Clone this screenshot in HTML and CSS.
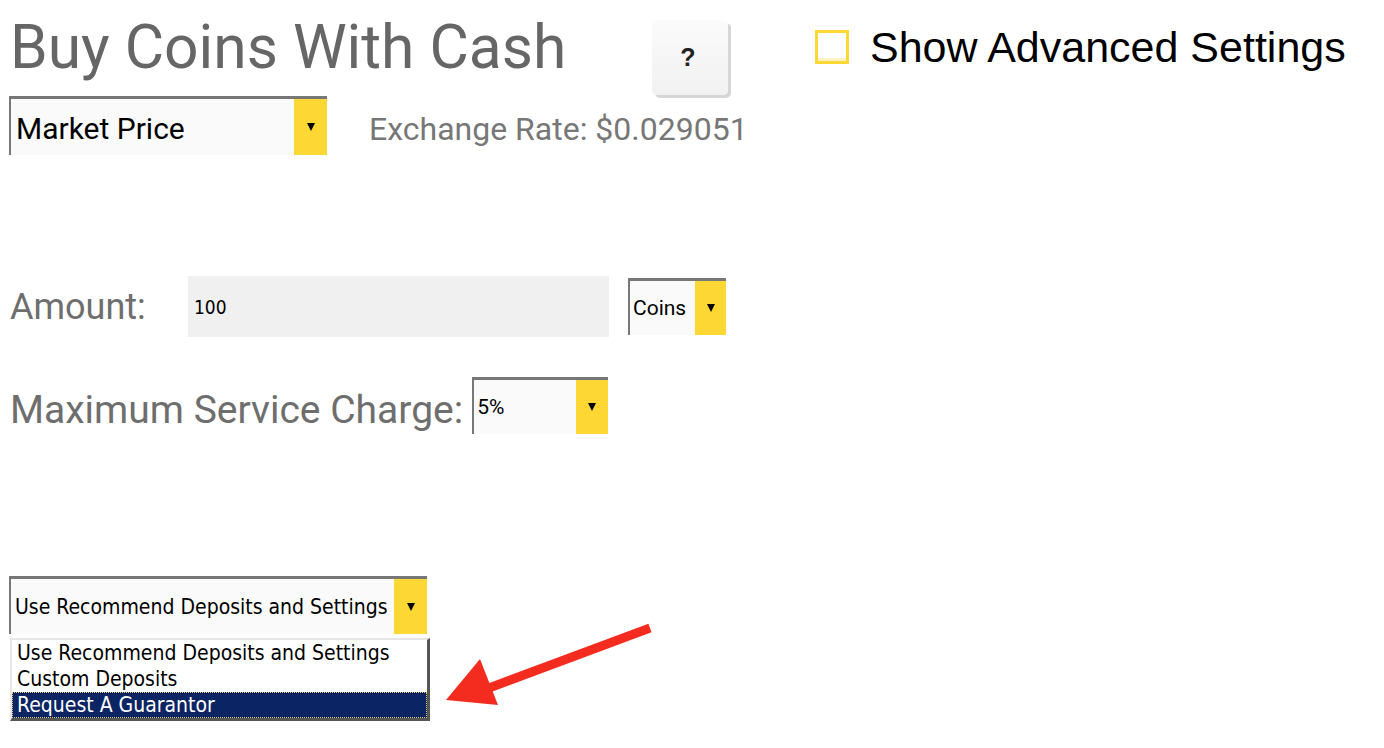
FILE: index.html
```html
<!DOCTYPE html>
<html>
<head>
<meta charset="utf-8">
<link rel="stylesheet" href="styles.css">
</head>
<body>
<div class="page">
  <div class="row-head">
    <h1 class="title">Buy Coins With Cash</h1>
    <button class="help">?</button>
    <label class="adv">
      <span class="checkbox"></span>
      <span class="adv-text">Show Advanced Settings</span>
    </label>
  </div>

  <div class="row-rate">
    <div class="select select-market">
      <span class="select-text">Market Price</span>
      <span class="select-btn"><span class="tri"></span></span>
    </div>
    <span class="rate">Exchange Rate: $0.029051</span>
  </div>

  <div class="row-amount">
    <span class="label label-amount">Amount:</span>
    <div class="input">100</div>
    <div class="select select-coins">
      <span class="select-text small">Coins</span>
      <span class="select-btn"><span class="tri"></span></span>
    </div>
  </div>

  <div class="row-charge">
    <span class="label label-charge">Maximum Service Charge:</span>
    <div class="select select-charge">
      <span class="select-text small">5%</span>
      <span class="select-btn"><span class="tri"></span></span>
    </div>
  </div>

  <div class="deposits">
    <div class="select select-deposits">
      <span class="select-text opt">Use Recommend Deposits and Settings</span>
      <span class="select-btn"><span class="tri"></span></span>
    </div>
    <ul class="list">
      <li class="opt">Use Recommend Deposits and Settings</li>
      <li class="opt">Custom Deposits</li>
      <li class="opt selected">Request A Guarantor</li>
    </ul>
  </div>
</div>

<svg class="arrow" width="220" height="100" viewBox="0 0 220 100">
  <line x1="206" y1="28" x2="45" y2="88" stroke="#f42c1f" stroke-width="9"/>
  <polygon points="2,104 36,63 54,109" fill="#f42c1f" transform="translate(0,-4)"/>
</svg>
</body>
</html>
```

FILE: styles.css
```css
html, body {
  margin: 0;
  padding: 0;
  background: #ffffff;
}

.page {
  padding: 12px 0 0 9px;
}

.row-head {
  display: flex;
  align-items: flex-start;
  height: 83px;
}

.title {
  margin: 0 0 0 1px;
  font-family: Roboto, "Liberation Sans", sans-serif;
  font-weight: 400;
  font-size: 60.5px;
  line-height: 72px;
  color: #666666;
  width: 642px;
  white-space: nowrap;
}

.help {
  margin-top: 8px;
  width: 76px;
  height: 75px;
  border: none;
  border-radius: 5px;
  background: linear-gradient(#fbfbfb, #f1f1f1);
  box-shadow: 3px 3px 0 #d6d6d6;
  font-family: "Liberation Sans", Arial, sans-serif;
  font-weight: 700;
  font-size: 25px;
  color: #222222;
  padding: 0 4px 0 0;
}

.adv {
  display: flex;
  align-items: flex-start;
  margin-left: 87px;
  margin-top: 11px;
}

.checkbox {
  width: 28px;
  height: 28px;
  border: 3px solid #fdd835;
  box-shadow: inset 0 -3px 0 #fff3c4;
  margin-top: 7px;
  background: #ffffff;
}

.adv-text {
  margin-left: 21px;
  font-family: "Liberation Sans", Arial, sans-serif;
  font-size: 43px;
  line-height: 48px;
  color: #000000;
  white-space: nowrap;
}

.row-rate {
  display: flex;
  align-items: center;
  margin-top: 1px;
}

.select {
  display: flex;
  align-items: stretch;
  box-sizing: border-box;
  border-top: 3px solid #777777;
  border-left: 2px solid #777777;
  background: #fafafa;
}

.select-text {
  flex: 1;
  display: flex;
  align-items: center;
  padding-left: 5px;
  font-family: Roboto, "Liberation Sans", sans-serif;
  color: #000000;
  white-space: nowrap;
  overflow: hidden;
}

.select-btn {
  width: 33px;
  background: #fdd835;
  display: flex;
  align-items: center;
  justify-content: center;
}

.tri {
  width: 0;
  height: 0;
  border-left: 4px solid transparent;
  border-right: 4px solid transparent;
  border-top: 8px solid #000000;
}

.select-market {
  width: 318px;
  height: 59px;
}

.select-market .select-text {
  font-size: 30px;
  padding-left: 5px;
  padding-top: 2px;
}

.rate {
  margin-left: 42px;
  padding-top: 7px;
  font-family: Roboto, "Liberation Sans", sans-serif;
  font-size: 32px;
  color: #777777;
  white-space: nowrap;
}

.row-amount {
  display: flex;
  align-items: center;
  margin-top: 121px;
}

.label {
  font-family: Roboto, "Liberation Sans", sans-serif;
  color: #6e6e6e;
  white-space: nowrap;
  padding-left: 1px;
}

.label-amount {
  width: 178px;
  font-size: 36px;
}

.label-charge {
  font-size: 39px;
  padding-top: 8px;
}

.input {
  width: 421px;
  height: 61px;
  background: #f0f0f0;
  display: flex;
  align-items: center;
  padding-left: 6px;
  box-sizing: border-box;
  font-family: "DejaVu Sans Condensed", Roboto, sans-serif;
  font-size: 19px;
  color: #000000;
}

.small {
  font-size: 21px;
  padding-left: 3px;
}

.select-coins {
  margin-left: 19px;
  width: 98px;
  height: 57px;
}

.select-coins .select-btn {
  width: 31px;
}

.row-charge {
  display: flex;
  align-items: center;
  margin-top: 40px;
}

.select-charge {
  margin-left: 9px;
  width: 136px;
  height: 57px;
}

.select-charge .select-btn {
  width: 32px;
}

.deposits {
  margin-top: 142px;
  width: 421px;
}

.select-deposits {
  width: 418px;
  height: 58px;
}

.opt {
  font-family: "DejaVu Sans Condensed", Roboto, sans-serif;
  font-size: 21px;
  color: #000000;
}

.select-deposits .select-text {
  padding-left: 4px;
}

.list {
  list-style: none;
  margin: 4px 0 0 1px;
  padding: 0;
  width: 420px;
  box-sizing: border-box;
  border-top: 2px solid #e6e6e6;
  border-left: 2px solid #e6e6e6;
  border-right: 3px solid #555555;
  border-bottom: 3px solid #555555;
  background: #ffffff;
}

.list li {
  height: 26px;
  line-height: 26px;
  padding-left: 5px;
  white-space: nowrap;
}

.list li.selected {
  background: #0b2463;
  color: #ffffff;
  outline: 1px dotted #e8c96a;
  outline-offset: -1px;
}

.arrow {
  position: absolute;
  left: 444px;
  top: 600px;
  overflow: visible;
}
```
